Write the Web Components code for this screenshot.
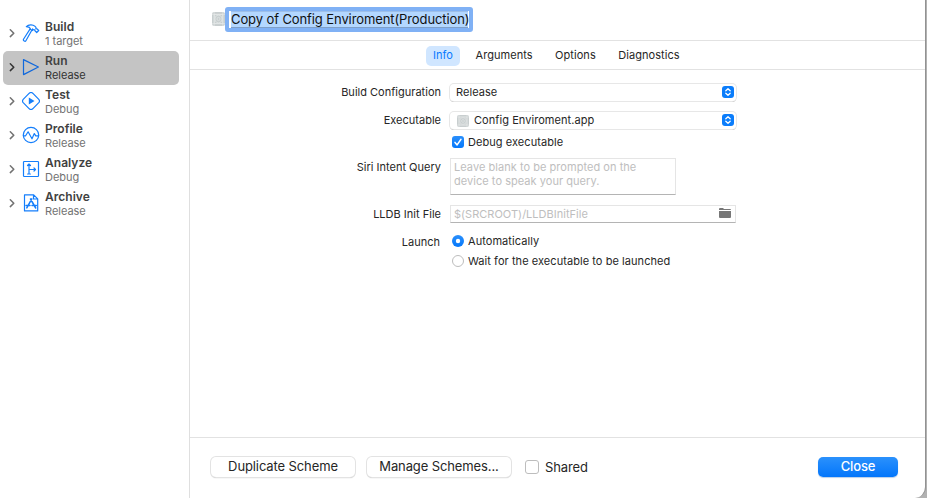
<!DOCTYPE html>
<html lang="en">
<head>
<meta charset="utf-8">
<title>Scheme editor</title>
<style>
html,body{margin:0;height:100%;overflow:hidden;background:#b2b2b2}
body{font-family:Inter,"Liberation Sans",sans-serif;color:#262626}
</style>
</head>
<body>
<scheme-window>
  <scheme-sidebar slot="side">
    <scheme-action name="Build" detail="1 target" icon="build"></scheme-action>
    <scheme-action name="Run" detail="Release" icon="run" selected></scheme-action>
    <scheme-action name="Test" detail="Debug" icon="test"></scheme-action>
    <scheme-action name="Profile" detail="Release" icon="profile"></scheme-action>
    <scheme-action name="Analyze" detail="Debug" icon="analyze"></scheme-action>
    <scheme-action name="Archive" detail="Release" icon="archive"></scheme-action>
  </scheme-sidebar>
  <scheme-title slot="title">Copy of Config Enviroment(Production)</scheme-title>
  <scheme-tabs slot="tabs"></scheme-tabs>
  <scheme-form slot="form"></scheme-form>
  <scheme-footer slot="footer"></scheme-footer>
</scheme-window>
<script>
const define = (name, render) => customElements.define(name, class extends HTMLElement {
  connectedCallback() {
    if (this.shadowRoot) return;
    this.attachShadow({ mode: 'open' }).innerHTML = render(this);
  }
});

const icons = {
  build: '<path d="M4.3 2.6C6.6.3 10.8.2 12.8 2.2L14 3.4l-.1 1.2 1.2.2 1.6 1.7-2 2-1.7-1.6-.1-1.1-1.3.1-1.1-.9-6.6 11.7c-.7 1.2-3.1.1-2.4-1.4L8.3 4.6C7.6 3 6 2.6 4.3 2.6Z"/><path d="m8 5.2 2.5 1.3"/>',
  run: '<path d="M1.5 1.6v15L16.4 9Z"/>',
  test: '<path d="M7.3 1.2q1.7-1.4 3.4 0l6.1 6.1q1.4 1.7 0 3.4l-6.1 6.1q-1.7 1.4-3.4 0l-6.1-6.1q-1.4-1.7 0-3.4Z"/><path d="M6.8 5.4v7.2L12.5 9Z" fill="currentColor" stroke="none"/>',
  profile: '<circle cx="9" cy="9" r="7.7"/><path d="M1.3 9.8h2.3l2.5-4 3.9 7 2.3-5.2 1.5 2.2h2.9"/>',
  analyze: '<rect x="1.5" y="1.5" width="15" height="15" rx=".8"/><path d="M7 4v10M5.5 5.5 7 4l1.5 1.5M7 9.5h6.5M12 8l1.5 1.5L12 11M5.6 14h2.8"/>',
  archive: '<path d="M2.5.9h9.2l4 4v12H2.5ZM11.5 1v4h4"/><path d="m9.8 4.9-5 9M8.5 5l5.2 9M4 11.5h4M10 11.5h4.3" stroke-width="1.5"/>'
};

define('scheme-window', () => `<style>
:host{display:flex;height:498px;width:926px;background:#fff;border-radius:0 0 11px 0;border-right:1px solid #929292;box-sizing:border-box;overflow:hidden}
.side{flex:none;width:189px;border-right:1px solid #dfdfdf}
.main{flex:1;min-width:0;display:flex;flex-direction:column}
.title{height:40px;border-bottom:1px solid #e2e2e2}
.tabs{height:28px;border-bottom:1px solid #e2e2e2}
.form{flex:1}
.foot{height:60px;border-top:1px solid #e2e2e2}
</style><div class="side"><slot name="side"></slot></div>
<div class="main"><div class="title"><slot name="title"></slot></div><div class="tabs"><slot name="tabs"></slot></div><div class="form"><slot name="form"></slot></div><div class="foot"><slot name="footer"></slot></div></div>`);

define('scheme-sidebar', () => `<style>:host{display:flex;flex-direction:column;padding:17px 10px 0 3px}</style><slot></slot>`);

define('scheme-action', el => `<style>
:host{display:flex;height:34px;box-sizing:border-box;border-radius:5px;align-items:center;padding:0 0 2px 6px;color:#727272}
:host([selected]){background:#c4c4c4;color:#333}
.chev{width:6px;height:10px;fill:none;stroke:currentColor;stroke-width:1.5;stroke-linecap:round;stroke-linejoin:round;flex:none}
.ico{width:18px;height:18px;margin:0 5px 0 7px;fill:none;stroke:currentColor;stroke-width:1.2;stroke-linejoin:round;stroke-linecap:round;color:#147efb;flex:none}
:host([selected]) .ico{color:#1068dc}
.t{display:flex;flex-direction:column;white-space:nowrap}
b{font-size:12px;line-height:15px;font-weight:600;color:#414141;letter-spacing:.03px}
span{font-size:11px;line-height:14px;letter-spacing:-.03px}
</style><svg class="chev" viewBox="0 0 6 10"><path d="M1.3 1.8 4.8 5.2 1.3 8.6"/></svg><svg class="ico" viewBox="0 0 18 18">${icons[el.getAttribute('icon')]}</svg><div class="t"><b>${el.getAttribute('name')}</b><span>${el.getAttribute('detail')}</span></div>`);

define('app-glyph', () => `<style>:host{display:block;width:12px;height:12px;flex:none}svg{display:block;width:100%;height:100%}</style>
<svg viewBox="0 0 12 12" preserveAspectRatio="none"><rect width="12" height="12" rx="2" fill="#c8cecf"/><g fill="none" stroke="#e4e8e8" stroke-width=".6"><rect x="2" y="2" width="8" height="8"/><circle cx="6" cy="6" r="3.3"/><circle cx="6" cy="6" r="1.4"/><path d="M0 2h12M0 10h12M2 0v12M10 0v12"/></g></svg>`);

define('scheme-title', () => `<style>
:host{display:flex;padding:7px 0 0 22px;align-items:flex-start}
app-glyph{width:13px;height:14px;margin-top:5px}
.f{box-sizing:border-box;width:248px;height:25px;border:4px solid #80b1f5;border-radius:3px;background:#fff;padding:0 1px 0 2px}
.s{display:block;box-sizing:border-box;width:237px;height:17px;background:#b3d7ff;box-shadow:inset 0 -1px #7e9fc8,inset 0 1px #9dbfe9;font-size:13px;line-height:17px;color:#111;white-space:nowrap;letter-spacing:-.1px}
</style><app-glyph></app-glyph><div class="f"><span class="s"><slot></slot></span></div>`);

define('scheme-tabs', () => `<style>
:host{display:flex;padding:5px 0 0 236px;font-size:11px;line-height:19px;white-space:nowrap;letter-spacing:.05px}
span{padding:0 7px;margin-right:8.5px;height:20px;border-radius:5px}
.on{background:#d0e6ff;color:#087aff}
</style><span class="on">Info</span><span>Arguments</span><span>Options</span><span>Diagnostics</span>`);

define('pop-up', () => `<style>
:host{display:flex;box-sizing:border-box;width:286px;height:17px;border-radius:4px;background:#fff;align-items:center;padding:0 2px 0 6px;box-shadow:0 0 0 1px #e7e7e7,0 1px .5px #a9a9a9}
.t{display:flex;gap:5px;flex:1;align-items:center;white-space:nowrap}
svg{width:12px;height:12px;display:block;margin-bottom:1px}
</style><div class="t"><slot></slot></div><svg viewBox="0 0 12 12"><rect width="12" height="12" rx="3" fill="#0b7dfb"/><path d="M3.8 4.8 6 2.7l2.2 2.1M3.8 7.2 6 9.3l2.2-2.1" fill="none" stroke="#fff" stroke-width="1.3" stroke-linecap="round" stroke-linejoin="round"/></svg>`);

define('tick-box', el => `<style>
:host{display:flex;align-items:center;gap:4px;white-space:nowrap}
i{box-sizing:border-box;width:12px;height:12px;border-radius:3px;border:1px solid #bdbdbd;background:#fff;flex:none;display:block}
:host([round]) i{border-radius:50%}
:host([large]) i{width:14px;height:14px}
:host([large]){gap:6px}
:host([checked]) i{border:0;background:linear-gradient(#2a8ffb,#0578fb)}
svg{display:block;width:12px;height:12px}
</style><i>${el.hasAttribute('checked') ? `<svg viewBox="0 0 12 12">${el.hasAttribute('round') ? '<circle cx="6" cy="6" r="2.2" fill="#fff"/>' : '<path d="m3 6.4 2.1 2.5L9 3.3" fill="none" stroke="#fff" stroke-width="1.5" stroke-linecap="round" stroke-linejoin="round"/>'}</svg>` : ''}</i><span><slot></slot></span>`);

define('text-box', () => `<style>
:host{display:flex;justify-content:space-between;box-sizing:border-box;border:1px solid #e5e5e5;border-bottom-color:#b4b4b4;padding:1px 4px 0 3px;color:#bebebe;line-height:14px;font-size:11px}
</style><slot></slot>`);

define('scheme-form', () => `<style>
:host{display:grid;grid-template-columns:251px 286px;column-gap:9px;grid-template-rows:28px 23px 23px 47px 29px 20px 20px;padding-top:14px;font-size:11px;line-height:17px;letter-spacing:.06px;white-space:nowrap;color:#262626}
label{text-align:right;letter-spacing:.01px}
.low{padding-top:1px}
.launch{padding-right:1px}
app-glyph{margin-left:1px}
tick-box{height:14px;padding-left:2px}
text-box.q{width:226px;height:37px;letter-spacing:.04px}
text-box.l{height:18px;letter-spacing:.02px}
svg{width:12px;height:10px;margin-top:1px}
</style>
<label>Build Configuration</label><pop-up>Release</pop-up>
<label>Executable</label><pop-up><app-glyph></app-glyph><span>Config Enviroment.app</span></pop-up>
<label></label><tick-box checked>Debug executable</tick-box>
<label class="low">Siri Intent Query</label><text-box class="q"><span>Leave blank to be prompted on the<br>device to speak your query.</span></text-box>
<label class="low">LLDB Init File</label><text-box class="l"><span>$(SRCROOT)/LLDBInitFile</span><svg viewBox="0 0 12 10"><path d="M0 2V1Q0 0 1 0h3l1 1h6q1 0 1 1Z" fill="#777"/><path d="M0 3h12v6q0 1-1 1H1Q0 10 0 9Z" fill="#777"/></svg></text-box>
<label class="launch">Launch</label><tick-box round checked>Automatically</tick-box>
<label></label><tick-box round>Wait for the executable to be launched</tick-box>`);

define('push-button', () => `<style>
:host{box-sizing:border-box;width:144px;height:20px;border-radius:5px;background:#fff;text-align:center;line-height:19px;box-shadow:0 0 0 1px #e3e3e3,0 1px 1px 0 #aaa;white-space:nowrap}
:host([primary]){width:80px;background:linear-gradient(#2b91fc,#0376fb);color:#fff;box-shadow:0 1px 1px #b8cfe9;font-weight:500}
</style><slot></slot>`);

define('scheme-footer', () => `<style>
:host{display:flex;align-items:flex-start;padding:19px 27px 0 21px;font-size:13px;letter-spacing:-.11px}
push-button+push-button{margin-left:12px}
tick-box{margin-left:14px;height:19px;flex:1}
</style><push-button>Duplicate Scheme</push-button><push-button>Manage Schemes...</push-button><tick-box large>Shared</tick-box><push-button primary>Close</push-button>`);
</script>
</body>
</html>
